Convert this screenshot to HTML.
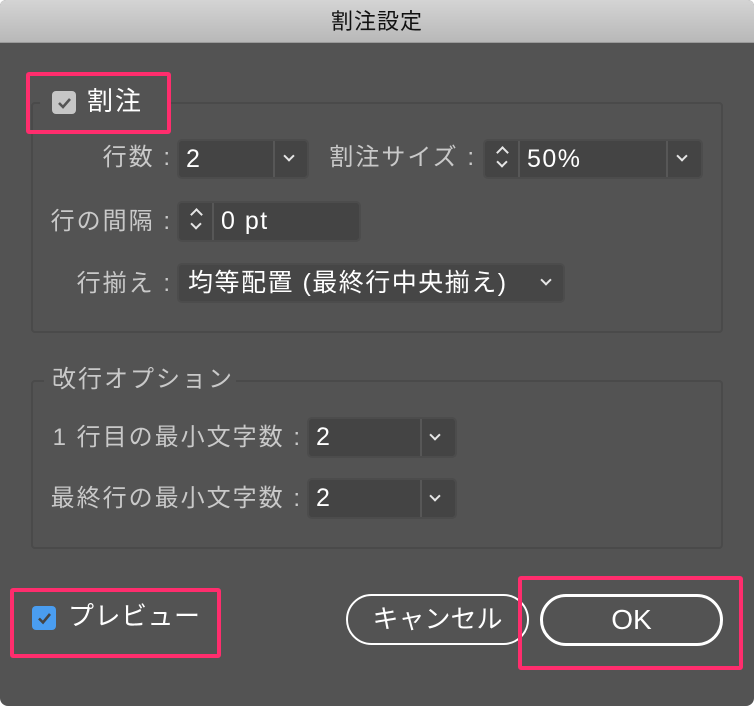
<!DOCTYPE html>
<html><head><meta charset="utf-8"><style>
*{box-sizing:border-box;margin:0;padding:0}
body{width:754px;height:706px;background:#fff;overflow:hidden;font-family:"Liberation Sans","Noto Sans CJK JP",sans-serif;position:relative}
.win{position:absolute;left:0;top:0;width:754px;height:706px;background:#535353;border-radius:6px 6px 8px 8px;overflow:hidden}
.title{position:absolute;left:0;top:0;width:754px;height:43px;background:linear-gradient(#d4d4d4,#b8b8b8);border-bottom:1px solid #9a9a9a;text-align:center;font-size:22px;letter-spacing:1px;line-height:43px;color:#111}
.a{position:absolute}
.grp{position:absolute;border:2px solid #4a4a4a;border-radius:4px}
.lbl{position:absolute;color:#c9c9c9;font-size:24px;letter-spacing:2px;line-height:26px;white-space:nowrap}
.fld{position:absolute;background:#444;border:2px solid #4c4c4c;border-radius:5px;color:#fff;font-size:25px;letter-spacing:1.5px}
.fld .t{position:absolute;top:0;line-height:36px}
.sep{position:absolute;top:0;bottom:0;width:2px;background:#575757}
.chev{position:absolute;width:8px;height:8px;border-right:2px solid #e6e6e6;border-bottom:2px solid #e6e6e6;transform:rotate(45deg)}
.up{position:absolute;width:9px;height:9px;border-left:2px solid #e6e6e6;border-top:2px solid #e6e6e6;transform:rotate(45deg)}
.pink{position:absolute;border:4px solid #ff2d6d;border-radius:3px}
.btn{position:absolute;border:2px solid #fff;border-radius:26px;color:#fff;font-size:26px;text-align:center}
</style></head><body><div class="win">
<div class="title">割注設定</div>

<div class="grp" style="left:31px;top:102px;width:692px;height:231px"></div>
<div class="a" style="left:40px;top:92px;width:130px;height:24px;background:#535353"></div>
<div class="a" style="left:52px;top:91px;width:24px;height:23px;background:#c6c6c6;border-radius:4px"></div>
<svg class="a" style="left:52px;top:91px" width="24" height="23"><path d="M7 12l4 4 7-8" stroke="#555" stroke-width="2.6" fill="none"/></svg>
<div class="lbl" style="left:87px;top:88px;color:#fff;font-size:26px;letter-spacing:2px">割注</div>
<div class="pink" style="left:26px;top:72px;width:145px;height:62px"></div>

<div class="lbl" style="right:582px;top:145px">行数 :</div>
<div class="fld" style="left:177px;top:139px;width:132px;height:40px"><span class="t" style="left:7px">2</span><div class="sep" style="left:94px"></div><div class="chev" style="left:106px;top:11px"></div></div>

<div class="lbl" style="right:278px;top:145px">割注サイズ :</div>
<div class="fld" style="left:483px;top:139px;width:220px;height:40px"><div class="up" style="left:13px;top:7px"></div><div class="chev" style="left:13px;top:17px"></div><div class="sep" style="left:33px"></div><span class="t" style="left:42px">50%</span><div class="sep" style="left:181px"></div><div class="chev" style="left:193px;top:11px"></div></div>

<div class="lbl" style="right:582px;top:209px">行の間隔 :</div>
<div class="fld" style="left:177px;top:201px;width:184px;height:41px"><div class="up" style="left:13px;top:7px"></div><div class="chev" style="left:13px;top:17px"></div><div class="sep" style="left:33px"></div><span class="t" style="left:42px">0 pt</span></div>

<div class="lbl" style="right:582px;top:271px">行揃え :</div>
<div class="fld" style="left:177px;top:263px;width:388px;height:40px;background:#464646"><span class="t" style="left:9px">均等配置 (最終行中央揃え)</span><div class="chev" style="left:363px;top:11px"></div></div>

<div class="grp" style="left:31px;top:380px;width:692px;height:169px"></div>
<div class="a" style="left:44px;top:370px;width:192px;height:20px;background:#535353"></div>
<div class="lbl" style="left:52px;top:367px">改行オプション</div>

<div class="lbl" style="right:452px;top:425px">1 行目の最小文字数 :</div>
<div class="fld" style="left:307px;top:417px;width:150px;height:41px"><span class="t" style="left:7px">2</span><div class="sep" style="left:111px"></div><div class="chev" style="left:122px;top:12px"></div></div>

<div class="lbl" style="right:452px;top:486px">最終行の最小文字数 :</div>
<div class="fld" style="left:307px;top:478px;width:150px;height:41px"><span class="t" style="left:7px">2</span><div class="sep" style="left:111px"></div><div class="chev" style="left:122px;top:12px"></div></div>

<div class="a" style="left:32px;top:606px;width:24px;height:24px;background:#4a9df0;border-radius:4px"></div>
<svg class="a" style="left:32px;top:606px" width="24" height="24"><path d="M7 12.5l4 4 7-8.5" stroke="#444" stroke-width="2.6" fill="none"/></svg>
<div class="lbl" style="left:68px;top:603px;color:#fff;font-size:26px;letter-spacing:0.5px">プレビュー</div>
<div class="pink" style="left:10px;top:588px;width:211px;height:70px"></div>

<div class="btn" style="left:346px;top:594px;width:183px;height:51px;line-height:47px">キャンセル</div>
<div class="btn" style="left:540px;top:594px;width:183px;height:52px;line-height:46px;border-width:3px;font-size:28px">OK</div>
<div class="pink" style="left:518px;top:576px;width:225px;height:94px"></div>
</div></body></html>
